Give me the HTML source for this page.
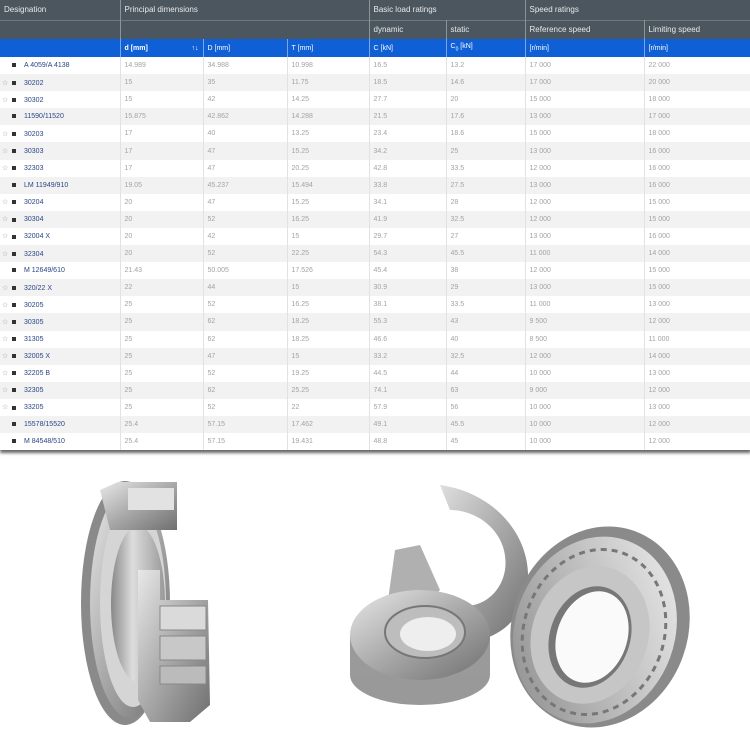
<!DOCTYPE html>
<html><head><meta charset="utf-8"><style>
*{margin:0;padding:0;box-sizing:border-box}
body{width:750px;height:750px;background:#fff;font-family:"Liberation Sans",sans-serif;overflow:hidden;position:relative}
table{border-collapse:collapse;width:750px;table-layout:fixed;position:absolute;top:0;left:0;box-shadow:0 3px 3px rgba(0,0,0,.6)}
td{font-size:7px;padding:0 4px;white-space:nowrap;overflow:hidden}
tr.h1 td{background:#4b565e;color:#e8eaec;height:20px;font-size:8px;border-right:1px solid #8a949b}
tr.h2 td{background:#4b565e;color:#e8eaec;height:19px;font-size:8px;border-right:1px solid #8a949b;border-top:1px solid #6d777e}
tr.h3 td{background:#0f5fd6;color:#fff;height:18px;font-size:7px;border-right:1px solid #7aa6ea}
tr.d td{height:17.1px;color:#a3a3a3;border-right:1px solid #e2e2e2}
tr.d:nth-child(odd) td{background:#f2f2f2}
tr.d:nth-child(even) td{background:#fff}
tr.d td:first-child{color:#2a4585;padding-left:2px}
.s{display:inline-block;width:7px;color:#999;font-size:7px}
.b{display:inline-block;width:4px;height:4px;background:#333;margin:0 8px 0 3px;vertical-align:middle}
</style></head><body>
<table>
<colgroup><col style="width:120px"><col style="width:83px"><col style="width:84px"><col style="width:82px"><col style="width:77px"><col style="width:79px"><col style="width:119px"><col style="width:106px"></colgroup>
<tr class="h1"><td>Designation</td><td colspan="3">Principal dimensions</td><td colspan="2">Basic load ratings</td><td colspan="2">Speed ratings</td></tr>
<tr class="h2"><td></td><td colspan="3"></td><td>dynamic</td><td>static</td><td>Reference speed</td><td>Limiting speed</td></tr>
<tr class="h3"><td></td><td><b>d [mm]</b><span style="float:right">↑↓</span></td><td>D [mm]</td><td>T [mm]</td><td>C [kN]</td><td>C<sub style="font-size:5px">0</sub> [kN]</td><td>[r/min]</td><td>[r/min]</td></tr>
<tr class="d"><td><span class="s"></span><span class="b"></span>A 4059/A 4138</td><td>14.989</td><td>34.988</td><td>10.998</td><td>16.5</td><td>13.2</td><td>17 000</td><td>22 000</td></tr>
<tr class="d"><td><span class="s">☆</span><span class="b"></span>30202</td><td>15</td><td>35</td><td>11.75</td><td>18.5</td><td>14.6</td><td>17 000</td><td>20 000</td></tr>
<tr class="d"><td><span class="s">☆</span><span class="b"></span>30302</td><td>15</td><td>42</td><td>14.25</td><td>27.7</td><td>20</td><td>15 000</td><td>18 000</td></tr>
<tr class="d"><td><span class="s"></span><span class="b"></span>11590/11520</td><td>15.875</td><td>42.862</td><td>14.288</td><td>21.5</td><td>17.6</td><td>13 000</td><td>17 000</td></tr>
<tr class="d"><td><span class="s">☆</span><span class="b"></span>30203</td><td>17</td><td>40</td><td>13.25</td><td>23.4</td><td>18.6</td><td>15 000</td><td>18 000</td></tr>
<tr class="d"><td><span class="s">☆</span><span class="b"></span>30303</td><td>17</td><td>47</td><td>15.25</td><td>34.2</td><td>25</td><td>13 000</td><td>16 000</td></tr>
<tr class="d"><td><span class="s">☆</span><span class="b"></span>32303</td><td>17</td><td>47</td><td>20.25</td><td>42.8</td><td>33.5</td><td>12 000</td><td>16 000</td></tr>
<tr class="d"><td><span class="s"></span><span class="b"></span>LM 11949/910</td><td>19.05</td><td>45.237</td><td>15.494</td><td>33.8</td><td>27.5</td><td>13 000</td><td>16 000</td></tr>
<tr class="d"><td><span class="s">☆</span><span class="b"></span>30204</td><td>20</td><td>47</td><td>15.25</td><td>34.1</td><td>28</td><td>12 000</td><td>15 000</td></tr>
<tr class="d"><td><span class="s">☆</span><span class="b"></span>30304</td><td>20</td><td>52</td><td>16.25</td><td>41.9</td><td>32.5</td><td>12 000</td><td>15 000</td></tr>
<tr class="d"><td><span class="s">☆</span><span class="b"></span>32004 X</td><td>20</td><td>42</td><td>15</td><td>29.7</td><td>27</td><td>13 000</td><td>16 000</td></tr>
<tr class="d"><td><span class="s">☆</span><span class="b"></span>32304</td><td>20</td><td>52</td><td>22.25</td><td>54.3</td><td>45.5</td><td>11 000</td><td>14 000</td></tr>
<tr class="d"><td><span class="s"></span><span class="b"></span>M 12649/610</td><td>21.43</td><td>50.005</td><td>17.526</td><td>45.4</td><td>38</td><td>12 000</td><td>15 000</td></tr>
<tr class="d"><td><span class="s">☆</span><span class="b"></span>320/22 X</td><td>22</td><td>44</td><td>15</td><td>30.9</td><td>29</td><td>13 000</td><td>15 000</td></tr>
<tr class="d"><td><span class="s">☆</span><span class="b"></span>30205</td><td>25</td><td>52</td><td>16.25</td><td>38.1</td><td>33.5</td><td>11 000</td><td>13 000</td></tr>
<tr class="d"><td><span class="s">☆</span><span class="b"></span>30305</td><td>25</td><td>62</td><td>18.25</td><td>55.3</td><td>43</td><td>9 500</td><td>12 000</td></tr>
<tr class="d"><td><span class="s">☆</span><span class="b"></span>31305</td><td>25</td><td>62</td><td>18.25</td><td>46.6</td><td>40</td><td>8 500</td><td>11 000</td></tr>
<tr class="d"><td><span class="s">☆</span><span class="b"></span>32005 X</td><td>25</td><td>47</td><td>15</td><td>33.2</td><td>32.5</td><td>12 000</td><td>14 000</td></tr>
<tr class="d"><td><span class="s">☆</span><span class="b"></span>32205 B</td><td>25</td><td>52</td><td>19.25</td><td>44.5</td><td>44</td><td>10 000</td><td>13 000</td></tr>
<tr class="d"><td><span class="s">☆</span><span class="b"></span>32305</td><td>25</td><td>62</td><td>25.25</td><td>74.1</td><td>63</td><td>9 000</td><td>12 000</td></tr>
<tr class="d"><td><span class="s">☆</span><span class="b"></span>33205</td><td>25</td><td>52</td><td>22</td><td>57.9</td><td>56</td><td>10 000</td><td>13 000</td></tr>
<tr class="d"><td><span class="s"></span><span class="b"></span>15578/15520</td><td>25.4</td><td>57.15</td><td>17.462</td><td>49.1</td><td>45.5</td><td>10 000</td><td>12 000</td></tr>
<tr class="d"><td><span class="s"></span><span class="b"></span>M 84548/510</td><td>25.4</td><td>57.15</td><td>19.431</td><td>48.8</td><td>45</td><td>10 000</td><td>12 000</td></tr>
</table>
<svg width="750" height="295" viewBox="0 455 750 295" style="position:absolute;top:455px;left:0">
<defs>
<linearGradient id="g" x1="0" y1="0" x2="1" y2="1"><stop offset="0" stop-color="#e8e8e8"/><stop offset=".5" stop-color="#a9a9a9"/><stop offset="1" stop-color="#6f6f6f"/></linearGradient>
<linearGradient id="g2" x1="1" y1="0" x2="0" y2="1"><stop offset="0" stop-color="#f0f0f0"/><stop offset="1" stop-color="#8a8a8a"/></linearGradient>
<linearGradient id="h" x1="0" y1="0" x2="1" y2="0"><stop offset="0" stop-color="#888"/><stop offset=".4" stop-color="#ddd"/><stop offset="1" stop-color="#999"/></linearGradient>
</defs>
<!-- left bearing -->
<ellipse cx="125" cy="603" rx="44" ry="122" fill="#8a8a8a"/>
<ellipse cx="130" cy="603" rx="40" ry="115" fill="url(#g)"/>
<ellipse cx="133" cy="603" rx="33" ry="104" fill="#d5d5d5"/>
<ellipse cx="138" cy="604" rx="27" ry="78" fill="url(#h)"/>
<path d="M100 490 L118 482 L177 482 L177 530 L110 530 Z" fill="url(#g)"/>
<rect x="128" y="488" width="46" height="22" fill="#e2e2e2"/>
<path d="M138 570 L160 570 L160 600 L208 600 L210 705 L190 722 L150 722 L138 700 Z" fill="url(#g)"/>
<rect x="160" y="606" width="46" height="24" fill="#dadada" stroke="#888" stroke-width="1"/>
<rect x="160" y="636" width="46" height="24" fill="#c8c8c8" stroke="#888" stroke-width="1"/>
<rect x="160" y="666" width="46" height="18" fill="#bbb" stroke="#888" stroke-width="1"/>
<!-- half C bearing -->
<path d="M440 485 C510 495 545 560 520 610 C500 645 455 650 425 630 L445 600 C470 615 500 600 505 570 C510 535 480 510 450 510 Z" fill="url(#g)"/>
<path d="M395 550 L420 545 L440 590 L410 620 L388 600 Z" fill="#b0b0b0"/>
<!-- small bearing -->
<ellipse cx="420" cy="675" rx="70" ry="30" fill="#999"/>
<rect x="350" y="635" width="140" height="40" fill="#9a9a9a"/>
<ellipse cx="420" cy="635" rx="70" ry="45" fill="url(#g)"/>
<ellipse cx="425" cy="632" rx="40" ry="26" fill="#bdbdbd" stroke="#777" stroke-width="2"/>
<ellipse cx="428" cy="634" rx="28" ry="17" fill="#eee"/>
<!-- large ring -->
<ellipse cx="600" cy="627" rx="88" ry="102" transform="rotate(20 600 627)" fill="#8a8a8a"/>
<ellipse cx="595" cy="630" rx="80" ry="95" transform="rotate(20 595 630)" fill="url(#g2)"/>
<ellipse cx="594" cy="632" rx="70" ry="84" transform="rotate(20 594 632)" fill="none" stroke="#777" stroke-width="3" stroke-dasharray="6 5"/>
<ellipse cx="590" cy="635" rx="58" ry="70" transform="rotate(20 590 635)" fill="#c6c6c6"/>
<ellipse cx="590" cy="637" rx="40" ry="52" transform="rotate(20 590 637)" fill="#777"/>
<ellipse cx="592" cy="637" rx="35" ry="47" transform="rotate(20 592 637)" fill="#fafafa"/>
</svg>
</body></html>
